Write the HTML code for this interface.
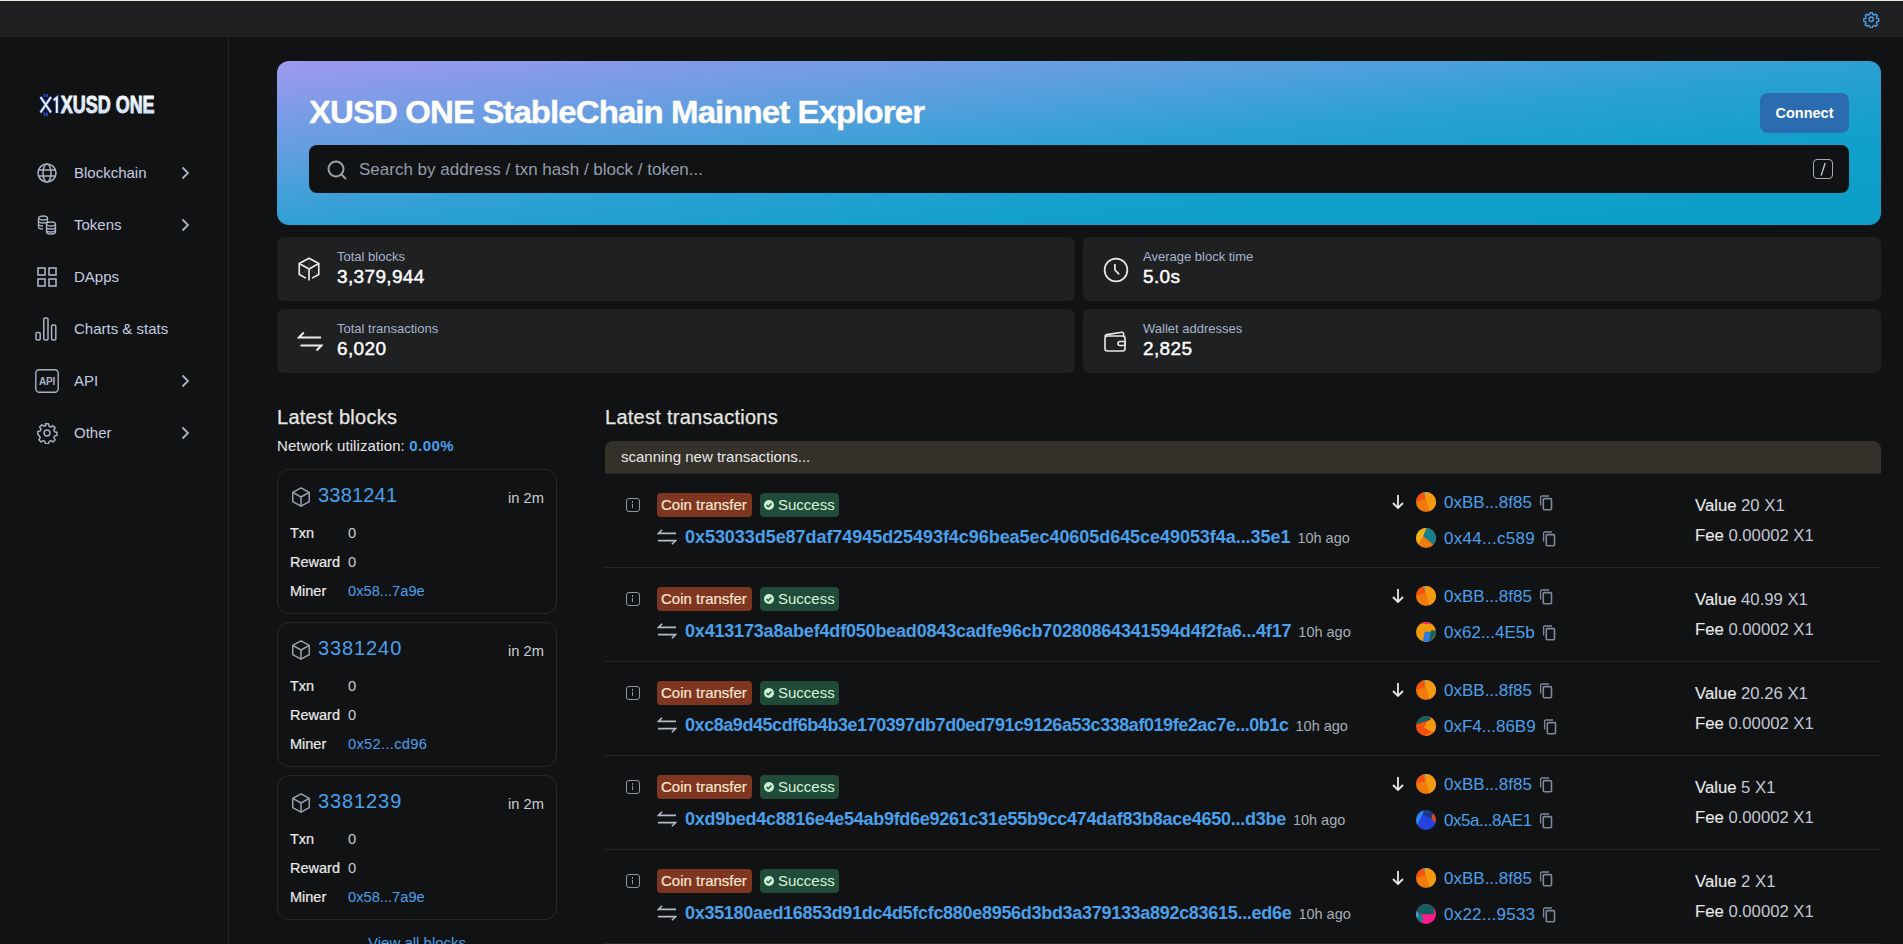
<!DOCTYPE html>
<html><head><meta charset="utf-8">
<style>
*{box-sizing:border-box;margin:0;padding:0}
html,body{width:1903px;height:944px;overflow:hidden;background:#111214;font-family:"Liberation Sans",sans-serif;color:#e2e4e8}
.a{position:absolute;white-space:nowrap}
#topline{left:0;top:0;width:1903px;height:1px;background:#e8eadf}
#topbar{left:0;top:1px;width:1903px;height:36px;background:#1f2022}
#sidebar{left:0;top:37px;width:229px;height:907px;border-right:1px solid #232427}
.logo{left:39px;top:92px;font-size:23px;font-weight:bold;letter-spacing:-0.9px;color:#e6eeff}
.nav{left:0;width:228px;height:52px}
.nav .ic{position:absolute;left:37px;top:17px;width:20px;height:20px}
.nav .t{position:absolute;left:74px;top:17px;font-size:15px;color:#c3cde0;line-height:20px}
.nav .ch{position:absolute;left:180px;top:20px;width:10px;height:14px}
#banner{left:277px;top:61px;width:1604px;height:164px;border-radius:12px;
 background:linear-gradient(to bottom right,#a099ee 0%,#809be7 14%,#629edf 28%,#45a0d9 40%,#2aa0d3 52%,#12a0cb 72%,#0b9ec6 100%)}
.title{left:309px;top:93px;font-size:33px;font-weight:bold;letter-spacing:-0.92px;color:#fff;line-height:38px;transform:scaleY(0.945);transform-origin:0 30px;-webkit-text-stroke:0.4px #fff}
#connect{left:1760px;top:93px;width:89px;height:40px;border-radius:8px;background:#2b6cb0;color:#fff;font-size:14.5px;font-weight:bold;text-align:center;line-height:40px}
#search{left:309px;top:145px;width:1540px;height:48px;border-radius:8px;background:#111214}
.ph{left:359px;top:160px;font-size:17px;color:#949cab;line-height:20px}
.card{background:#1f2022;border-radius:7px;height:64px;width:798px}
.card .lab{position:absolute;left:60px;top:12px;font-size:13px;color:#a6b4cc;line-height:16px}
.card .val{position:absolute;left:60px;top:29px;font-size:19px;font-weight:normal;-webkit-text-stroke:0.45px #fff;color:#fff;line-height:22px;letter-spacing:0.35px}
.card svg{position:absolute;left:20px;top:20px}
.sec-h{font-size:20px;color:#e6e6e0;line-height:24px;letter-spacing:0.27px;-webkit-text-stroke:0.25px #e6e6e0}
.util{left:277px;top:437px;font-size:15px;color:#e6e6e6;line-height:18px;letter-spacing:0.1px}
.util b{color:#4a9fe9;letter-spacing:0.5px;font-size:15px}
.blk{left:277px;width:280px;height:145px;border:1px solid #26282b;border-radius:12px}
.blk .num{position:absolute;left:40px;top:13px;font-size:20px;color:#4aa0ea;line-height:24px;letter-spacing:0.2px}
.blk .cube{position:absolute;left:12px;top:16px}
.blk .tm{position:absolute;right:12px;top:19px;font-size:14.7px;color:#c8ccd2;line-height:18px}
.blk .r{position:absolute;left:12px;margin-top:-1px;font-size:14.5px;color:#eaeaea;line-height:18px;-webkit-text-stroke:0.2px #eaeaea}
.blk .v{position:absolute;left:70px;margin-top:-1px;font-size:14.7px;color:#c8ccd2;line-height:18px}
.blk .v.l{color:#4aa0ea}
.scan{left:605px;top:441px;width:1276px;height:33px;border-bottom:1px solid #1d2026;background:#34302a;border-radius:8px 8px 0 0;font-size:15px;color:#e8e8e8;line-height:32px;padding-left:16px}
.tx{left:605px;width:1276px;height:94px;border-bottom:1px solid #25272a}
.tx .info{position:absolute;left:21px;top:24px;width:14px;height:14px;border:1.3px solid #8f97a3;border-radius:3px}
.tx .info:after{content:"";position:absolute;left:4.7px;top:4.5px;width:1.6px;height:4.5px;background:#8f97a3}
.tx .info:before{content:"";position:absolute;left:4.7px;top:2px;width:1.6px;height:1.6px;background:#8f97a3}
.badge{position:absolute;top:19px;height:24px;border-radius:4px;font-size:15px;line-height:24px;padding:0 4px}
.b1{left:52px;width:95px;background:#7f3620;color:#f7e6cf;-webkit-text-stroke:0.2px #f7e6cf}
.b2{left:155px;width:79px;background:#1f4b38;color:#d6f5dc;padding-left:18px}
.b2 svg{position:absolute;left:4px;top:7px}
.hl{position:absolute;left:80px;top:52px;line-height:22px}
.hash{font-size:18px;font-weight:bold;color:#4aa0ea;letter-spacing:-0.06px}
.ago{font-size:14.5px;color:#a8aeb8;margin-left:7px}
.tx .sw{position:absolute;left:52px;top:54px}
.arr{position:absolute;left:787px;top:20px}
.av{position:absolute;left:811px;width:20px;height:20px;border-radius:50%;overflow:hidden}
.addr{position:absolute;left:839px;font-size:17px;color:#4aa0ea;line-height:20px}
.addr svg{position:relative;margin-left:7px;top:2.5px}
.cp{position:absolute}
.vl{position:absolute;left:1090px;margin-top:1px;font-size:16.7px;color:#e8e8e8;line-height:20px;-webkit-text-stroke:0.15px #e8e8e8}
.vl span{color:#c2c8d2;-webkit-text-stroke:0}
</style></head><body>
<div id="topline" class="a"></div><div id="topbar" class="a"></div>
<svg class="a" style="left:1863px;top:11px" width="16.5" height="16.5" viewBox="0 0 24 24" fill="none" stroke="#4ba2ea" stroke-width="2"><circle cx="12" cy="12" r="3.2"/><path d="M10.3 2.5h3.4l.6 2.6 1.9.8 2.3-1.4 2.4 2.4-1.4 2.3.8 1.9 2.6.6v3.4l-2.6.6-.8 1.9 1.4 2.3-2.4 2.4-2.3-1.4-1.9.8-.6 2.6h-3.4l-.6-2.6-1.9-.8-2.3 1.4-2.4-2.4 1.4-2.3-.8-1.9-2.6-.6v-3.4l2.6-.6.8-1.9-1.4-2.3 2.4-2.4 2.3 1.4 1.9-.8z" stroke-linejoin="round"/></svg>
<div id="sidebar" class="a"></div>
<svg class="a" style="left:0;top:0;overflow:visible" width="229" height="140" viewBox="0 0 229 140"><defs><linearGradient id="lg" x1="0" y1="0" x2="0" y2="1"><stop offset="0" stop-color="#ffffff"/><stop offset="1" stop-color="#c6dcf6"/></linearGradient><filter id="gl" x="-30%" y="-30%" width="160%" height="160%"><feGaussianBlur stdDeviation="0.6" result="b"/><feMerge><feMergeNode in="b"/><feMergeNode in="SourceGraphic"/></feMerge></filter></defs><g stroke="#2a5cf0" stroke-width="3.2" fill="none" opacity="0.9"><path d="M40.5 97L51 112.5M51 97L40.5 112.5M53.5 100.5L57 97.5V113"/><path d="M44.5 94v3M47 94v3M44.5 112.5v3.5M47 112.5v3.5" stroke-width="1.6"/></g><g stroke="#f4f8ff" stroke-width="1.7" fill="none"><path d="M40.5 97L51 112.5M51 97L40.5 112.5"/><path d="M53.8 100.2L56.8 97.6V113" stroke-width="1.9"/></g><text x="60.8" y="113" font-family="Liberation Sans" font-weight="bold" font-size="23.2" fill="url(#lg)" stroke="url(#lg)" stroke-width="0.9" textLength="93.8" lengthAdjust="spacingAndGlyphs">XUSD ONE</text></svg>
<div class="a nav" style="top:146px"><svg class="ic" viewBox="0 0 20 20" fill="none" stroke="#a9b3c4" stroke-width="1.5"><circle cx="10" cy="10" r="9"/><ellipse cx="10" cy="10" rx="4" ry="9"/><path d="M1.5 7h17M1.5 13h17"/></svg><div class="t">Blockchain</div><svg class="ch" viewBox="0 0 10 14" fill="none" stroke="#a9b3c4" stroke-width="1.8"><path d="M2.5 1.5l5.5 5.5-5.5 5.5"/></svg></div>
<div class="a nav" style="top:198px"><svg class="ic" viewBox="0 0 20 20" fill="none" stroke="#a9b3c4" stroke-width="1.3"><ellipse cx="6" cy="3" rx="4.5" ry="2"/><path d="M1.5 3v9c0 1.1 2 2 4.5 2"/><path d="M1.5 6c0 1.1 2 2 4.5 2s4.5-.9 4.5-2M1.5 9c0 1.1 2 2 4.5 2M10.5 3v4"/><ellipse cx="14" cy="9" rx="4.5" ry="2"/><path d="M9.5 9v8c0 1.1 2 2 4.5 2s4.5-.9 4.5-2V9M9.5 12c0 1.1 2 2 4.5 2s4.5-.9 4.5-2M9.5 15c0 1.1 2 2 4.5 2s4.5-.9 4.5-2"/></svg><div class="t">Tokens</div><svg class="ch" viewBox="0 0 10 14" fill="none" stroke="#a9b3c4" stroke-width="1.8"><path d="M2.5 1.5l5.5 5.5-5.5 5.5"/></svg></div>
<div class="a nav" style="top:250px"><svg class="ic" viewBox="0 0 20 20" fill="none" stroke="#a9b3c4" stroke-width="1.6"><rect x="1" y="1" width="7" height="7"/><rect x="12" y="1" width="7" height="7"/><rect x="1" y="12" width="7" height="7"/><rect x="12" y="12" width="7" height="7"/></svg><div class="t">DApps</div></div>
<div class="a nav" style="top:302px"><svg class="ic" style="left:35px;top:15px;width:22px;height:24px" viewBox="0 0 22 24" fill="none" stroke="#a9b3c4" stroke-width="1.5"><rect x="1" y="15.5" width="4.2" height="7.5" rx="1.3"/><rect x="8.8" y="1" width="4.2" height="22" rx="1.3"/><rect x="16.6" y="8" width="4.2" height="15" rx="1.3"/></svg><div class="t">Charts &amp; stats</div></div>
<div class="a nav" style="top:354px"><svg class="ic" style="left:35px;top:15px;width:24px;height:24px" viewBox="0 0 24 24" fill="none"><rect x="0.8" y="0.8" width="22.4" height="22.4" rx="3.5" stroke="#a9b3c4" stroke-width="1.4"/><text x="12" y="16" text-anchor="middle" font-family="Liberation Sans" font-weight="bold" font-size="10" letter-spacing="-0.3" fill="#a9b3c4">API</text></svg><div class="t">API</div><svg class="ch" viewBox="0 0 10 14" fill="none" stroke="#a9b3c4" stroke-width="1.8"><path d="M2.5 1.5l5.5 5.5-5.5 5.5"/></svg></div>
<div class="a nav" style="top:406px"><svg class="ic" style="left:36px;top:16px;width:22px;height:22px" viewBox="0 0 24 24" fill="none" stroke="#a9b3c4" stroke-width="1.6"><circle cx="12" cy="12" r="3.2"/><path d="M10.3 2h3.4l.6 2.7 1.9.8 2.3-1.5 2.4 2.4-1.5 2.3.8 1.9 2.7.6v3.4l-2.7.6-.8 1.9 1.5 2.3-2.4 2.4-2.3-1.5-1.9.8-.6 2.7h-3.4l-.6-2.7-1.9-.8-2.3 1.5-2.4-2.4 1.5-2.3-.8-1.9L2 13.7v-3.4l2.7-.6.8-1.9L4 5.5 6.4 3.1l2.3 1.5 1.9-.8z" stroke-linejoin="round"/></svg><div class="t">Other</div><svg class="ch" viewBox="0 0 10 14" fill="none" stroke="#a9b3c4" stroke-width="1.8"><path d="M2.5 1.5l5.5 5.5-5.5 5.5"/></svg></div>
<div id="banner" class="a"></div>
<div class="a title">XUSD ONE StableChain Mainnet Explorer</div>
<div id="connect" class="a">Connect</div>
<div id="search" class="a"></div>
<svg class="a" style="left:325px;top:158px" width="24" height="24" viewBox="0 0 24 24" fill="none" stroke="#9aa0a8" stroke-width="2"><circle cx="11" cy="11" r="7.5"/><path d="M16.5 16.5l4.5 4.5"/></svg>
<div class="a ph">Search by address / txn hash / block / token...</div>
<div class="a" style="left:1813px;top:159px;width:20px;height:20px;border:1px solid #a4acba;border-radius:4px"></div>
<svg class="a" style="left:1813px;top:159px" width="20" height="20" viewBox="0 0 20 20"><path d="M12.2 4L8.1 16.6" stroke="#c8ccd8" stroke-width="1.3"/></svg>
<div class="a card" style="left:277px;top:237px"><svg width="26" height="26" viewBox="0 0 24 24" fill="none" stroke="#ececec" stroke-width="1.5" stroke-linejoin="round" style="left:19px;top:19px"><path d="M12 2l9 5-9 5-9-5z"/><path d="M3 7v10l6.2 3.4M21 7v10l-6.2 3.4M12 12v10.5"/><path d="M12 2.5v9.5M3.5 17l8.5-5 8.5 5" stroke="#8a8a8a" stroke-width="0.6" stroke-dasharray="1 1.2"/></svg><div class="lab">Total blocks</div><div class="val">3,379,944</div></div>
<div class="a card" style="left:1083px;top:237px"><svg width="26" height="26" viewBox="0 0 24 24" fill="none" stroke="#e8e8e8" stroke-width="1.6"><circle cx="12" cy="12" r="10.5"/><path d="M11 6.5v5.5l4 4"/></svg><div class="lab">Average block time</div><div class="val">5.0s</div></div>
<div class="a card" style="left:277px;top:309px"><svg width="26" height="24" viewBox="0 0 26 24" fill="none" stroke="#ececec" stroke-width="2"><path d="M24 8.5H1.8l5-5M3.5 16.5h21l-5 5"/></svg><div class="lab">Total transactions</div><div class="val">6,020</div></div>
<div class="a card" style="left:1083px;top:309px"><svg width="26" height="24" viewBox="0 0 26 24" fill="none" stroke="#e8e8e8" stroke-width="1.6" stroke-linejoin="round"><path d="M2 7.5C2 6.5 2.8 5.8 3.8 5.6L19 3.3c.9-.1 1.6.5 1.6 1.4V7"/><rect x="2" y="7" width="20" height="15" rx="2.5"/><path d="M22 12.5h-5a2 2 0 000 4h5z"/></svg><div class="lab">Wallet addresses</div><div class="val">2,825</div></div>
<div class="a sec-h" style="left:277px;top:405px">Latest blocks</div>
<div class="a util">Network utilization: <b>0.00%</b></div>
<div class="a blk" style="top:469px"><svg class="cube" width="22" height="22" viewBox="0 0 24 24" fill="none" stroke="#9aa3b0" stroke-width="1.6" stroke-linejoin="round"><path d="M12 2l9 5v10l-9 5-9-5V7z"/><path d="M3 7l9 5 9-5M12 12v10"/></svg><div class="num" style="letter-spacing:0.2px">3381241</div><div class="tm">in 2m</div><div class="r" style="top:55px">Txn</div><div class="v" style="top:55px">0</div><div class="r" style="top:84px">Reward</div><div class="v" style="top:84px">0</div><div class="r" style="top:113px">Miner</div><div class="v l" style="top:113px;letter-spacing:0px">0x58...7a9e</div></div>
<div class="a blk" style="top:622px"><svg class="cube" width="22" height="22" viewBox="0 0 24 24" fill="none" stroke="#9aa3b0" stroke-width="1.6" stroke-linejoin="round"><path d="M12 2l9 5v10l-9 5-9-5V7z"/><path d="M3 7l9 5 9-5M12 12v10"/></svg><div class="num" style="letter-spacing:0.9px">3381240</div><div class="tm">in 2m</div><div class="r" style="top:55px">Txn</div><div class="v" style="top:55px">0</div><div class="r" style="top:84px">Reward</div><div class="v" style="top:84px">0</div><div class="r" style="top:113px">Miner</div><div class="v l" style="top:113px;letter-spacing:0.3px">0x52...cd96</div></div>
<div class="a blk" style="top:775px"><svg class="cube" width="22" height="22" viewBox="0 0 24 24" fill="none" stroke="#9aa3b0" stroke-width="1.6" stroke-linejoin="round"><path d="M12 2l9 5v10l-9 5-9-5V7z"/><path d="M3 7l9 5 9-5M12 12v10"/></svg><div class="num" style="letter-spacing:0.9px">3381239</div><div class="tm">in 2m</div><div class="r" style="top:55px">Txn</div><div class="v" style="top:55px">0</div><div class="r" style="top:84px">Reward</div><div class="v" style="top:84px">0</div><div class="r" style="top:113px">Miner</div><div class="v l" style="top:113px;letter-spacing:0px">0x58...7a9e</div></div>
<div class="a" style="left:368px;top:934px;font-size:15px;color:#4aa0ea;line-height:18px">View all blocks</div>
<div class="a sec-h" style="left:605px;top:405px">Latest transactions</div>
<div class="a scan">scanning new transactions...</div>
<div class="a tx" style="top:474px"><div class="info"></div><div class="badge b1">Coin transfer</div><div class="badge b2"><svg width="10" height="10" viewBox="0 0 10 10"><circle cx="5" cy="5" r="5" fill="#c9f2d2"/><path d="M2.6 5.1l1.6 1.6 3.2-3.3" fill="none" stroke="#1f4b38" stroke-width="1.4"/></svg>Success</div><svg class="sw" width="20" height="18" viewBox="0 0 22 20" fill="none" stroke="#b4bac4" stroke-width="1.8"><path d="M21 6H1.5l4-4M1 14h19.5l-4 4"/></svg><div class="hl"><span class="hash" style="letter-spacing:-0.05px">0x53033d5e87daf74945d25493f4c96bea5ec40605d645ce49053f4a...35e1</span><span class="ago">10h ago</span></div><svg class="arr" width="12" height="16" viewBox="0 0 12 16" fill="none" stroke="#e8e8e8" stroke-width="1.8"><path d="M6 1v13M1 9l5 5 5-5"/></svg><div class="av" style="top:18px"><svg width="20" height="20" viewBox="0 0 20 20"><rect width="20" height="20" fill="#f07a0a"/><polygon points="8.6,0 20,0 20,20 13.5,20 9.3,4.6" fill="#f39b10"/><polygon points="0,0 7.4,0 9.2,6.8 0,10" fill="#f5510f"/><polygon points="7.3,0 8.7,0 9.4,4.6 9.1,4.8" fill="#3aa0d8"/></svg></div><div class="addr" style="top:18px">0xBB...8f85<svg width="14" height="16" viewBox="0 0 14 16" fill="none" stroke="#7e8a9a" stroke-width="1.6"><rect x="4.3" y="3.6" width="8.2" height="11.2" rx="1"/><path d="M1.6 10.5V2.2C1.6 1.5 2.1 1 2.8 1H10" stroke-width="1.3"/></svg></div><div class="av" style="top:54px"><svg width="20" height="20" viewBox="0 0 20 20"><rect width="20" height="20" fill="#f07a0a"/><polygon points="0,0 10.5,0 7.2,8.3 2.7,15.7 0,14" fill="#f0b418"/><polygon points="10.5,0 20,0 20,14 17.2,16.5 7.2,8.3" fill="#14808f"/></svg></div><div class="addr" style="top:54px"><span style="letter-spacing:0.27px">0x44...c589</span><svg width="14" height="16" viewBox="0 0 14 16" fill="none" stroke="#7e8a9a" stroke-width="1.6"><rect x="4.3" y="3.6" width="8.2" height="11.2" rx="1"/><path d="M1.6 10.5V2.2C1.6 1.5 2.1 1 2.8 1H10" stroke-width="1.3"/></svg></div><div class="vl" style="top:21px">Value <span>20 X1</span></div><div class="vl" style="top:51px">Fee <span>0.00002 X1</span></div></div>
<div class="a tx" style="top:568px"><div class="info"></div><div class="badge b1">Coin transfer</div><div class="badge b2"><svg width="10" height="10" viewBox="0 0 10 10"><circle cx="5" cy="5" r="5" fill="#c9f2d2"/><path d="M2.6 5.1l1.6 1.6 3.2-3.3" fill="none" stroke="#1f4b38" stroke-width="1.4"/></svg>Success</div><svg class="sw" width="20" height="18" viewBox="0 0 22 20" fill="none" stroke="#b4bac4" stroke-width="1.8"><path d="M21 6H1.5l4-4M1 14h19.5l-4 4"/></svg><div class="hl"><span class="hash" style="letter-spacing:-0.187px">0x413173a8abef4df050bead0843cadfe96cb70280864341594d4f2fa6...4f17</span><span class="ago">10h ago</span></div><svg class="arr" width="12" height="16" viewBox="0 0 12 16" fill="none" stroke="#e8e8e8" stroke-width="1.8"><path d="M6 1v13M1 9l5 5 5-5"/></svg><div class="av" style="top:18px"><svg width="20" height="20" viewBox="0 0 20 20"><rect width="20" height="20" fill="#f07a0a"/><polygon points="8.6,0 20,0 20,20 13.5,20 9.3,4.6" fill="#f39b10"/><polygon points="0,0 7.4,0 9.2,6.8 0,10" fill="#f5510f"/><polygon points="7.3,0 8.7,0 9.4,4.6 9.1,4.8" fill="#3aa0d8"/></svg></div><div class="addr" style="top:18px">0xBB...8f85<svg width="14" height="16" viewBox="0 0 14 16" fill="none" stroke="#7e8a9a" stroke-width="1.6"><rect x="4.3" y="3.6" width="8.2" height="11.2" rx="1"/><path d="M1.6 10.5V2.2C1.6 1.5 2.1 1 2.8 1H10" stroke-width="1.3"/></svg></div><div class="av" style="top:54px"><svg width="20" height="20" viewBox="0 0 20 20"><rect width="20" height="20" fill="#f39a0c"/><polygon points="0,0 20,0 20,2 0,2" fill="#f5500f"/><polygon points="9,0 14,0 14,2 9,2" fill="#ff1a9a"/><polygon points="8.75,9.6 14.4,9.9 13.8,20 6.7,20" fill="#2a7ce0"/><polygon points="14.4,9.9 15.3,8.2 20,8.75 20,12.6 13.8,20" fill="#126060"/></svg></div><div class="addr" style="top:54px"><span style="letter-spacing:0px">0x62...4E5b</span><svg width="14" height="16" viewBox="0 0 14 16" fill="none" stroke="#7e8a9a" stroke-width="1.6"><rect x="4.3" y="3.6" width="8.2" height="11.2" rx="1"/><path d="M1.6 10.5V2.2C1.6 1.5 2.1 1 2.8 1H10" stroke-width="1.3"/></svg></div><div class="vl" style="top:21px">Value <span>40.99 X1</span></div><div class="vl" style="top:51px">Fee <span>0.00002 X1</span></div></div>
<div class="a tx" style="top:662px"><div class="info"></div><div class="badge b1">Coin transfer</div><div class="badge b2"><svg width="10" height="10" viewBox="0 0 10 10"><circle cx="5" cy="5" r="5" fill="#c9f2d2"/><path d="M2.6 5.1l1.6 1.6 3.2-3.3" fill="none" stroke="#1f4b38" stroke-width="1.4"/></svg>Success</div><svg class="sw" width="20" height="18" viewBox="0 0 22 20" fill="none" stroke="#b4bac4" stroke-width="1.8"><path d="M21 6H1.5l4-4M1 14h19.5l-4 4"/></svg><div class="hl"><span class="hash" style="letter-spacing:-0.446px">0xc8a9d45cdf6b4b3e170397db7d0ed791c9126a53c338af019fe2ac7e...0b1c</span><span class="ago">10h ago</span></div><svg class="arr" width="12" height="16" viewBox="0 0 12 16" fill="none" stroke="#e8e8e8" stroke-width="1.8"><path d="M6 1v13M1 9l5 5 5-5"/></svg><div class="av" style="top:18px"><svg width="20" height="20" viewBox="0 0 20 20"><rect width="20" height="20" fill="#f07a0a"/><polygon points="8.6,0 20,0 20,20 13.5,20 9.3,4.6" fill="#f39b10"/><polygon points="0,0 7.4,0 9.2,6.8 0,10" fill="#f5510f"/><polygon points="7.3,0 8.7,0 9.4,4.6 9.1,4.8" fill="#3aa0d8"/></svg></div><div class="addr" style="top:18px">0xBB...8f85<svg width="14" height="16" viewBox="0 0 14 16" fill="none" stroke="#7e8a9a" stroke-width="1.6"><rect x="4.3" y="3.6" width="8.2" height="11.2" rx="1"/><path d="M1.6 10.5V2.2C1.6 1.5 2.1 1 2.8 1H10" stroke-width="1.3"/></svg></div><div class="av" style="top:54px"><svg width="20" height="20" viewBox="0 0 20 20"><rect width="20" height="20" fill="#f5500f"/><polygon points="0,0 14,0 15,3.6 0,8.5" fill="#136060"/><polygon points="14,0 20,0 20,20 17,17 8.2,11.5 11,5.8 15,3.6" fill="#f29a0c"/><polygon points="8,20 16.5,15 20,18 20,20" fill="#f07a0a"/></svg></div><div class="addr" style="top:54px"><span style="letter-spacing:0px">0xF4...86B9</span><svg width="14" height="16" viewBox="0 0 14 16" fill="none" stroke="#7e8a9a" stroke-width="1.6"><rect x="4.3" y="3.6" width="8.2" height="11.2" rx="1"/><path d="M1.6 10.5V2.2C1.6 1.5 2.1 1 2.8 1H10" stroke-width="1.3"/></svg></div><div class="vl" style="top:21px">Value <span>20.26 X1</span></div><div class="vl" style="top:51px">Fee <span>0.00002 X1</span></div></div>
<div class="a tx" style="top:756px"><div class="info"></div><div class="badge b1">Coin transfer</div><div class="badge b2"><svg width="10" height="10" viewBox="0 0 10 10"><circle cx="5" cy="5" r="5" fill="#c9f2d2"/><path d="M2.6 5.1l1.6 1.6 3.2-3.3" fill="none" stroke="#1f4b38" stroke-width="1.4"/></svg>Success</div><svg class="sw" width="20" height="18" viewBox="0 0 22 20" fill="none" stroke="#b4bac4" stroke-width="1.8"><path d="M21 6H1.5l4-4M1 14h19.5l-4 4"/></svg><div class="hl"><span class="hash" style="letter-spacing:-0.263px">0xd9bed4c8816e4e54ab9fd6e9261c31e55b9cc474daf83b8ace4650...d3be</span><span class="ago">10h ago</span></div><svg class="arr" width="12" height="16" viewBox="0 0 12 16" fill="none" stroke="#e8e8e8" stroke-width="1.8"><path d="M6 1v13M1 9l5 5 5-5"/></svg><div class="av" style="top:18px"><svg width="20" height="20" viewBox="0 0 20 20"><rect width="20" height="20" fill="#f07a0a"/><polygon points="8.6,0 20,0 20,20 13.5,20 9.3,4.6" fill="#f39b10"/><polygon points="0,0 7.4,0 9.2,6.8 0,10" fill="#f5510f"/><polygon points="7.3,0 8.7,0 9.4,4.6 9.1,4.8" fill="#3aa0d8"/></svg></div><div class="addr" style="top:18px">0xBB...8f85<svg width="14" height="16" viewBox="0 0 14 16" fill="none" stroke="#7e8a9a" stroke-width="1.6"><rect x="4.3" y="3.6" width="8.2" height="11.2" rx="1"/><path d="M1.6 10.5V2.2C1.6 1.5 2.1 1 2.8 1H10" stroke-width="1.3"/></svg></div><div class="av" style="top:54px"><svg width="20" height="20" viewBox="0 0 20 20"><rect width="20" height="20" fill="#2542e0"/><polygon points="0,0 7.9,0 5.8,5.8 1.6,14.4 0,14.4" fill="#2a88e6"/><polygon points="7.9,0 20,0 20,4.2 15.3,9.3 7.3,4.6" fill="#1d3a80"/><polygon points="15.3,9.3 16.8,3.7 20,4.2 20,13" fill="#e04420"/></svg></div><div class="addr" style="top:54px"><span style="letter-spacing:-0.44px">0x5a...8AE1</span><svg width="14" height="16" viewBox="0 0 14 16" fill="none" stroke="#7e8a9a" stroke-width="1.6"><rect x="4.3" y="3.6" width="8.2" height="11.2" rx="1"/><path d="M1.6 10.5V2.2C1.6 1.5 2.1 1 2.8 1H10" stroke-width="1.3"/></svg></div><div class="vl" style="top:21px">Value <span>5 X1</span></div><div class="vl" style="top:51px">Fee <span>0.00002 X1</span></div></div>
<div class="a tx" style="top:850px"><div class="info"></div><div class="badge b1">Coin transfer</div><div class="badge b2"><svg width="10" height="10" viewBox="0 0 10 10"><circle cx="5" cy="5" r="5" fill="#c9f2d2"/><path d="M2.6 5.1l1.6 1.6 3.2-3.3" fill="none" stroke="#1f4b38" stroke-width="1.4"/></svg>Success</div><svg class="sw" width="20" height="18" viewBox="0 0 22 20" fill="none" stroke="#b4bac4" stroke-width="1.8"><path d="M21 6H1.5l4-4M1 14h19.5l-4 4"/></svg><div class="hl"><span class="hash" style="letter-spacing:-0.299px">0x35180aed16853d91dc4d5fcfc880e8956d3bd3a379133a892c83615...ed6e</span><span class="ago">10h ago</span></div><svg class="arr" width="12" height="16" viewBox="0 0 12 16" fill="none" stroke="#e8e8e8" stroke-width="1.8"><path d="M6 1v13M1 9l5 5 5-5"/></svg><div class="av" style="top:18px"><svg width="20" height="20" viewBox="0 0 20 20"><rect width="20" height="20" fill="#f07a0a"/><polygon points="8.6,0 20,0 20,20 13.5,20 9.3,4.6" fill="#f39b10"/><polygon points="0,0 7.4,0 9.2,6.8 0,10" fill="#f5510f"/><polygon points="7.3,0 8.7,0 9.4,4.6 9.1,4.8" fill="#3aa0d8"/></svg></div><div class="addr" style="top:18px">0xBB...8f85<svg width="14" height="16" viewBox="0 0 14 16" fill="none" stroke="#7e8a9a" stroke-width="1.6"><rect x="4.3" y="3.6" width="8.2" height="11.2" rx="1"/><path d="M1.6 10.5V2.2C1.6 1.5 2.1 1 2.8 1H10" stroke-width="1.3"/></svg></div><div class="av" style="top:54px"><svg width="20" height="20" viewBox="0 0 20 20"><rect width="20" height="20" fill="#ff1c8a"/><polygon points="0,0 20,0 20,10.2 4.3,10.2 0.5,7.3" fill="#125e5e"/><polygon points="17.9,3 20,3 20,10.2 17.9,10.2" fill="#ff1c8a"/><polygon points="0,8 4.3,10.2 7.6,14.7 4.5,19.5 0,17" fill="#128090"/><polygon points="0,7 1.2,7.8 2.5,12.5 0,13" fill="#3aa8e8"/></svg></div><div class="addr" style="top:54px"><span style="letter-spacing:0.22px">0x22...9533</span><svg width="14" height="16" viewBox="0 0 14 16" fill="none" stroke="#7e8a9a" stroke-width="1.6"><rect x="4.3" y="3.6" width="8.2" height="11.2" rx="1"/><path d="M1.6 10.5V2.2C1.6 1.5 2.1 1 2.8 1H10" stroke-width="1.3"/></svg></div><div class="vl" style="top:21px">Value <span>2 X1</span></div><div class="vl" style="top:51px">Fee <span>0.00002 X1</span></div></div>
</body></html>
